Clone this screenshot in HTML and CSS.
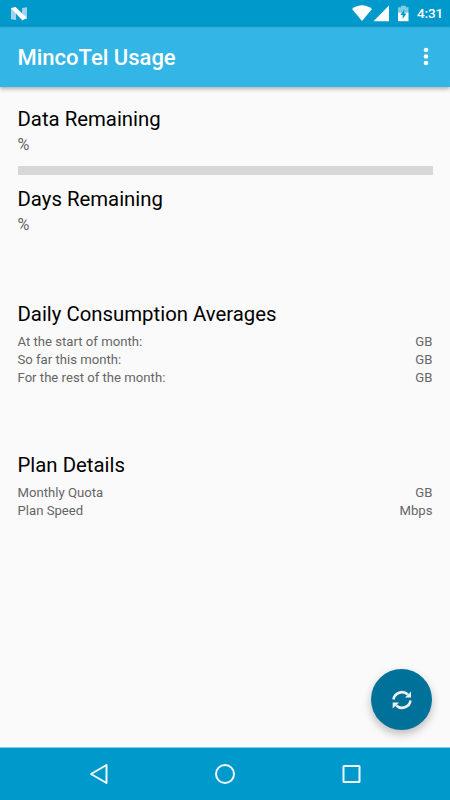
FILE: index.html
```html
<!DOCTYPE html>
<html lang="en">
<head>
<meta charset="utf-8">
<title>MincoTel Usage</title>
<link rel="stylesheet" href="styles.css">
</head>
<body>
<div class="screen">
  <div class="status">
    <svg class="logo" width="16" height="14" viewBox="0 0 16 14"><path d="M0 1l5-.8V13l-5-.7zM11 1l5-.8V12l-5 .5z" fill="#9dd5ec"/><path d="M0 1.2L4.500 0 15.500 10.500 11.500 13.500z" fill="#fff"/></svg>
    <svg class="signals" width="66" height="18" viewBox="0 0 66 18">
      <path d="M0 4Q10-3.500 20 4L10 16z" fill="#fff"/>
      <path d="M37 .5V16.200H21.500z" fill="#fff"/>
      <path d="M49 .7h5v1.500h2.500V7.500H46V2.200h3z" fill="#7fcae6"/>
      <path d="M46 7.500h10.500V16.200H46z" fill="#fff"/>
      <path d="M52.300 4.500L48.300 10h2.400v4L54.500 8.500h-2.200z" fill="#0099cc"/>
    </svg>
    <span class="clock">4:31</span>
  </div>
  <header class="bar">
    <h1>MincoTel Usage</h1>
    <svg width="6" height="20" viewBox="0 0 6 20" fill="#fff"><circle cx="3" cy="3" r="2.300"/><circle cx="3" cy="9.500" r="2.300"/><circle cx="3" cy="16" r="2.300"/></svg>
  </header>
  <main>
    <section class="data"><h2>Data Remaining</h2><p>%</p><div class="progress"></div></section>
    <section class="days"><h2>Days Remaining</h2><p>%</p></section>
    <section class="averages">
      <h2>Daily Consumption Averages</h2>
      <div class="row"><span>At the start of month:</span><span>GB</span></div>
      <div class="row"><span>So far this month:</span><span>GB</span></div>
      <div class="row"><span>For the rest of the month:</span><span>GB</span></div>
    </section>
    <section class="plan">
      <h2>Plan Details</h2>
      <div class="row"><span>Monthly Quota</span><span>GB</span></div>
      <div class="row"><span>Plan Speed</span><span>Mbps</span></div>
    </section>
  </main>
  <div class="fab">
    <svg width="20" height="20" viewBox="0 0 20 20"><path d="M1.500 9.500A8.500 8.300 0 0 1 15.800 4.500M18.500 10.500A8.500 8.300 0 0 1 4.200 15.500" fill="none" stroke="#f0f0f0" stroke-width="2.500"/><path d="M19 1.500V7.500H13zM.7 18.500V12.500H7z" fill="#f0f0f0"/></svg>
  </div>
  <nav>
    <svg width="20" height="22" viewBox="0 0 20 22"><path d="M2 11L17.500 2v18z"/></svg>
    <svg width="22" height="22" viewBox="0 0 22 22"><circle cx="11" cy="11" r="9"/></svg>
    <svg width="20" height="20" viewBox="0 0 20 20"><rect x="2.500" y="2" width="16" height="16" rx=".5"/></svg>
  </nav>
</div>
</body>
</html>
```
FILE: styles.css
```css
* { box-sizing: border-box; margin: 0; padding: 0; }
body { font-family: Roboto, sans-serif; background: #fafafa; }
svg { display: block; }
.screen { position: relative; width: 450px; height: 800px; display: flex; flex-direction: column; overflow: hidden; }
.status { height: 26px; background: #0099cc; display: flex; align-items: flex-start; padding: 5px 8px 0 11px; }
.logo { margin-top: 2px; }
.signals { margin-left: auto; }
.clock { color: #fff; font-size: 13.500px; font-weight: 500; line-height: 17px; letter-spacing: -.1px; width: 25px; white-space: nowrap; margin: 0 0 0 -1px; }
.bar { height: 61px; background: linear-gradient(#148fb9, #33b5e5 2px); display: flex; align-items: center; justify-content: space-between; padding: 0 21px 0 17.500px; box-shadow: 0 2px 4px rgba(0,0,0,.3); }
h1 { color: #fff; font-size: 22px; font-weight: 500; line-height: 26px; margin-top: 3px; }
main { flex: 1; padding: 20px 17.500px 0; color: #666; }
h2 { color: #000; font-size: 20.350px; font-weight: 400; line-height: 24px; }
p { font-size: 16.300px; line-height: 18px; margin-top: 5px; }
.progress { height: 9px; background: #d7d7d7; margin-top: 12px; }
.days { margin-top: 12px; }
.averages { margin-top: 68px; }
.row { display: flex; justify-content: space-between; font-size: 13.150px; line-height: 17.800px; }
h2 + .row { margin-top: 7px; }
.plan { margin-top: 66.600px; }
.fab { position: absolute; left: 371px; top: 669px; width: 61px; height: 61px; border-radius: 50%; background: #007299; display: flex; align-items: center; justify-content: center; box-shadow: 0 4px 9px rgba(0,0,0,.25); }
nav { height: 53px; background: #0099cc; border-top: 1px solid #80cce5; display: flex; align-items: center; justify-content: space-between; padding: 0 89px; }
nav svg { fill: none; stroke: #f0f9fc; stroke-width: 2; stroke-linejoin: round; }
```
